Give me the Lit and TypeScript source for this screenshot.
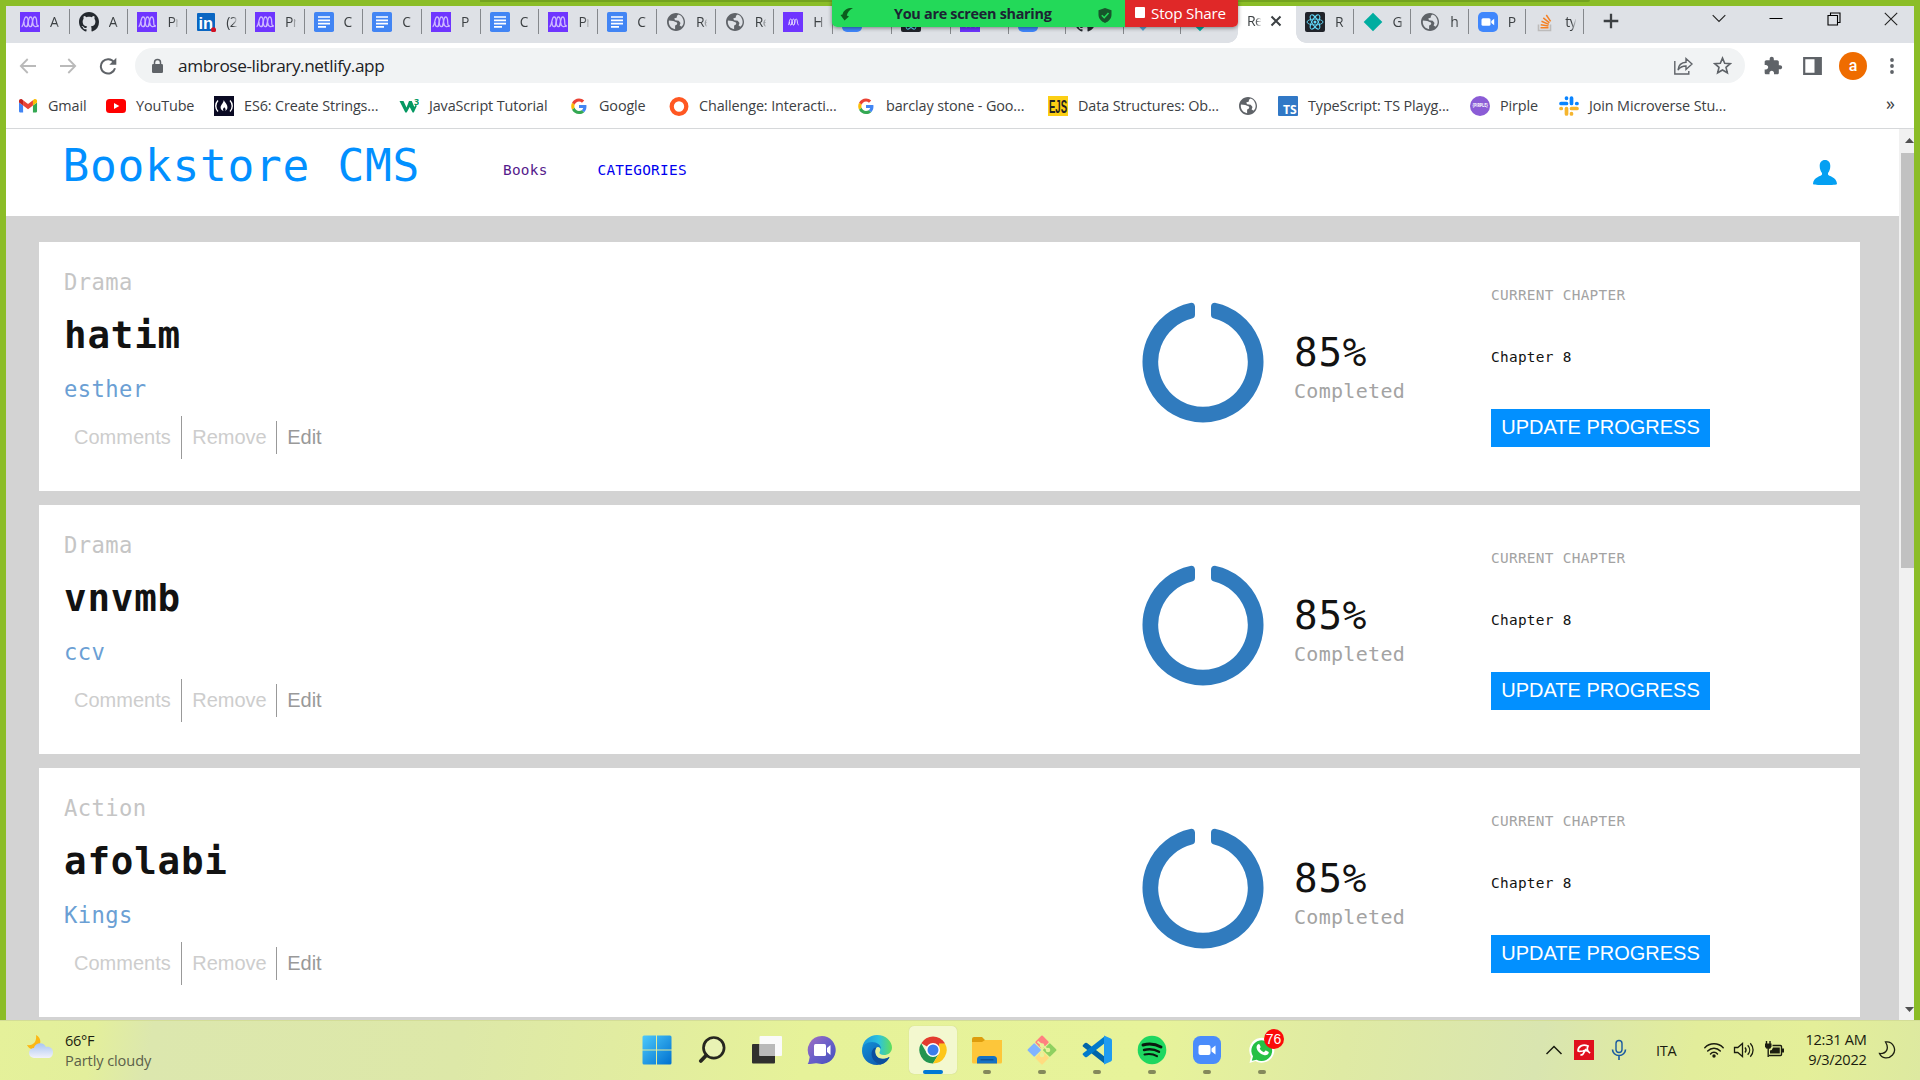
import { LitElement, html, svg, css } from "lit";
import { customElement, property } from "lit/decorators.js";

const ICONS: Record<string, unknown> = {
  microverse: svg`<rect width="20" height="20" fill="#6f35ff"/><g fill="none" stroke="#cdb8ff" stroke-width="1.300"><path d="M1.500 14.500C4 14.500 3.500 5 6 5c1.600 0 2.200 2 2.200 5s-.7 4.700-2 4.700S4 12.500 4 10"/><path d="M6.200 14.700C8.500 14.500 8 5 10.300 5c1.600 0 2.200 2 2.200 5s-.7 4.700-2 4.700S8.300 12.500 8.300 10"/><path d="M10.500 14.700C12.800 14.500 12.300 5 14.500 5c1.600 0 2.200 2 2.200 5 0 2.500.5 4.500 2 4.500M18.500 13c-1.500 2.500-5.500 2.500-5.800-2.500"/></g>`,
  microverseSmall: svg`<rect width="20" height="20" fill="#6f35ff"/><g fill="none" stroke="#e6dcff" stroke-width=".9"><path d="M5 13c1.400 0 1-6 2.600-6 1.900 0 1.900 6 0 6-1 0-1.100-1.500-1.100-3M7.800 13c1.400 0 1-6 2.600-6 1.900 0 1.900 6 0 6-1 0-1.100-1.500-1.100-3M10.600 13c1.400 0 1-6 2.600-6 1.700 0 .7 6 2.400 6"/></g>`,
  github: svg`<path transform="scale(1.25)" fill="#24292f" d="M8 0C3.580 0 0 3.580 0 8c0 3.540 2.290 6.530 5.470 7.590.4.07.55-.17.55-.38 0-.19-.01-.82-.01-1.490-2.010.37-2.530-.49-2.690-.94-.09-.23-.48-.94-.82-1.130-.28-.15-.68-.52-.01-.53.63-.01 1.080.58 1.230.82.72 1.210 1.870.87 2.330.66.07-.52.28-.87.51-1.070-1.780-.2-3.640-.89-3.640-3.950 0-.87.31-1.590.82-2.150-.08-.2-.36-1.020.08-2.120 0 0 .67-.21 2.200.82.64-.18 1.320-.27 2-.27s1.360.09 2 .27c1.530-1.040 2.200-.82 2.200-.82.44 1.100.16 1.920.08 2.120.51.56.82 1.270.82 2.150 0 3.070-1.870 3.750-3.650 3.950.29.25.54.73.54 1.480 0 1.070-.01 1.930-.01 2.200 0 .21.15.46.55.38A8.010 8.010 0 0 0 16 8c0-4.420-3.580-8-8-8"/>`,
  linkedin: svg`<rect x="1" y="1" width="18" height="18" rx="1" fill="#0a66c2"/><text x="2.500" y="16.500" font-family="Liberation Sans" font-weight="700" font-size="16.500" fill="#fff">in</text><circle cx="17.500" cy="17.800" r="2.600" fill="#d11124"/>`,
  doc: svg`<rect width="20" height="20" rx="1.800" fill="#4285f4"/><path d="M4 5h12M4 8.300h12M4 11.600h12M4 14.900h8" stroke="#fff" stroke-width="1.700"/>`,
  globe: svg`<path transform="translate(-.8 -.8) scale(.9)" fill="#5f6368" d="M12 2C6.480 2 2 6.480 2 12s4.480 10 10 10 10-4.480 10-10S17.520 2 12 2zm-1 17.930c-3.950-.49-7-3.850-7-7.930 0-.62.08-1.210.21-1.790L9 11l4 1.500c1 1.500 0 2.500-2 3.500v3.930zm6.900-2.540c-.5-.8-1.200-1.100-1.900-1.390l1-3-2-2.500-4-.5-1-2 3-1V5l2-1.400c3 .9 5.500 4.600 5.500 8.400 0 2.080-.8 3.970-2.600 5.390z"/>`,
  zoom: svg`<rect width="20" height="20" rx="5" fill="#4087fc"/><rect x="3.500" y="6.300" width="9" height="7.400" rx="1.500" fill="#fff"/><path d="M13.300 9l2.900-2.200v6.400L13.300 11z" fill="#fff"/>`,
  react: svg`<rect width="20" height="20" rx="2" fill="#20232a"/><g fill="none" stroke="#61dafb" stroke-width=".9"><ellipse cx="10" cy="10" rx="8" ry="3"/><ellipse cx="10" cy="10" rx="8" ry="3" transform="rotate(60 10 10)"/><ellipse cx="10" cy="10" rx="8" ry="3" transform="rotate(120 10 10)"/></g><circle cx="10" cy="10" r="1.500" fill="#61dafb"/>`,
  diamond: svg`<path d="M10 .7l9.300 9.300-9.300 9.300L.7 10z" fill="#00ada0"/>`,
  diamondBlue: svg`<path d="M10 1l8 9-8 9-8-9z" fill="#5aa7d6"/>`,
  stack: svg`<path d="M3.500 12.500v6h12v-6" fill="none" stroke="#bcbbbb" stroke-width="1.600"/><path d="M5.500 15.800h8M5.700 12.700l7.800 1.400M6.500 9.300l7.300 3.100M8.300 5.900l6.100 4.900M11.300 3l4.300 6.300" stroke="#f48024" stroke-width="1.500"/>`,
  gmail: svg`<g transform="translate(1 3) scale(.205) translate(-52 -42)"><path fill="#4285f4" d="M58 108h14V74L52 59v43c0 3.320 2.690 6 6 6"/><path fill="#34a853" d="M120 108h14c3.320 0 6-2.690 6-6V59l-20 15"/><path fill="#fbbc04" d="M120 48v26l20-15v-8c0-7.420-8.470-11.650-14.400-7.200"/><path fill="#ea4335" d="M72 74V48l24 18 24-18v26L96 92"/><path fill="#c5221f" d="M52 51v8l20 15V48l-5.600-4.200c-5.940-4.450-14.400-.22-14.400 7.200"/></g>`,
  youtube: svg`<rect y="3" width="20" height="14" rx="3.500" fill="#f00"/><path d="M8 7l5.300 3L8 13z" fill="#fff"/>`,
  fcc: svg`<rect width="20" height="20" fill="#0a0a23"/><path d="M4 4.500c-3 3-3 8 0 11M16 4.500c3 3 3 8 0 11" fill="none" stroke="#fff" stroke-width="1.400"/><path d="M9.800 4c1 2.500 4.200 5 3.600 8-.2 1.400-1.200 2.600-2.400 3 1-1.200.8-2.500-.7-3.800-1.500 1.200-1.700 2.600-.7 3.800-1.700-.4-3-1.700-3-3.400 0-2.800 3-4.500 3.200-7.600z" fill="#fff"/>`,
  w3: svg`<path d="M.5 5h4l3 6.500L10 5h2.800l2.500 6 1.500-2.500 1 1.500-3 6.500h-1.200L10.700 11l-3 5.500H6.300z" fill="#059862"/><text x="15" y="9" font-family="Open Sans" font-weight="700" font-size="9" fill="#059862">3</text>`,
  google: svg`<g transform="translate(2.200 2.500) scale(.325)"><path fill="#EA4335" d="M24 9.500c3.540 0 6.710 1.220 9.210 3.600l6.850-6.850C35.900 2.380 30.470 0 24 0 14.620 0 6.510 5.380 2.560 13.220l7.980 6.190C12.430 13.720 17.740 9.500 24 9.500z"/><path fill="#4285F4" d="M46.980 24.550c0-1.570-.15-3.090-.38-4.550H24v9.020h12.940c-.58 2.960-2.260 5.480-4.780 7.180l7.730 6c4.510-4.180 7.090-10.360 7.090-17.650z"/><path fill="#FBBC05" d="M10.530 28.590c-.48-1.450-.76-2.990-.76-4.590s.27-3.140.76-4.590l-7.980-6.190C.92 16.460 0 20.120 0 24c0 3.880.92 7.540 2.560 10.780l7.970-6.190z"/><path fill="#34A853" d="M24 48c6.480 0 11.930-2.130 15.890-5.810l-7.730-6c-2.150 1.450-4.920 2.300-8.160 2.300-6.260 0-11.570-4.220-13.470-9.910l-7.980 6.190C6.510 42.620 14.620 48 24 48z"/></g>`,
  ring: svg`<circle cx="10" cy="10.500" r="7.300" fill="none" stroke="#ff5722" stroke-width="4.300"/>`,
  ejs: svg`<rect width="20" height="20" fill="#fccf14"/><text x="1" y="16.500" textLength="18" lengthAdjust="spacingAndGlyphs" font-family="Liberation Sans" font-weight="700" font-size="17.500" fill="#222">EJS</text>`,
  ts: svg`<rect width="20" height="20" rx="1" fill="#3178c6"/><text x="5" y="18" textLength="13.500" lengthAdjust="spacingAndGlyphs" font-family="Open Sans" font-weight="700" font-size="12" fill="#fff">TS</text>`,
  pirple: svg`<circle cx="10" cy="10" r="10" fill="#8b5cd6"/><text x="2.600" y="11.300" textLength="15" lengthAdjust="spacingAndGlyphs" font-family="Open Sans" font-weight="700" font-size="4.500" fill="#fff">{PIRPLE}</text>`,
  slack: svg`<g stroke-width="3.700" stroke-linecap="round"><path d="M7.500 7.500H2M12.500 2v5.500" stroke="#0a84ff"/><path d="M7.500 2v.3M18 7.500h-.3" stroke="#0a84ff"/><path d="M12.500 12.500H18M7.500 12.500V18" stroke="#f5b52e"/><path d="M12.500 18v-.3M2 12.500h.3" stroke="#f5b52e"/></g>`,
};

const icon = (name: string, cls = "fav") => html`<svg class=${cls} viewBox="0 0 20 20">${ICONS[name]}</svg>`;

const TABS: [string, string][] = [
  ["microverse", "A"], ["github", "A"], ["microverse", "Pr"], ["linkedin", "(2"], ["microverse", "Pr"],
  ["doc", "C"], ["doc", "C"], ["microverse", "P"], ["doc", "C"], ["microverse", "Pr"], ["doc", "C"],
  ["globe", "Re"], ["globe", "Re"], ["microverseSmall", "H"], ["zoom", ""], ["react", ""], ["microverse", ""],
  ["zoom", ""], ["github", ""], ["diamondBlue", ""], ["diamond", ""],
];
const TABS_AFTER: [string, string][] = [
  ["react", "R"], ["diamond", "G"], ["globe", "h"], ["zoom", "P"], ["stack", "ty"],
];
const BOOKMARKS: [string, string][] = [
  ["gmail", "Gmail"], ["youtube", "YouTube"], ["fcc", "ES6: Create Strings..."], ["w3", "JavaScript Tutorial"],
  ["google", "Google"], ["ring", "Challenge: Interacti..."], ["google", "barclay stone - Goo..."],
  ["ejs", "Data Structures: Ob..."], ["globe", ""], ["ts", "TypeScript: TS Playg..."], ["pirple", "Pirple"],
  ["slack", "Join Microverse Stu..."],
];

@customElement("browser-chrome")
class BrowserChrome extends LitElement {
  static styles = css`
    :host { display: block; font-family: "Open Sans", "Noto Sans", sans-serif; color: #3c4043; }
    svg { display: block; flex: none; }
    .strip { display: flex; height: 37px; background: #dee1e6; padding-left: 5px; box-sizing: border-box; }
    .tabs { display: grid; grid-template-columns: repeat(17, 58.72px) repeat(4, 57.2px) 58px repeat(5, 57.6px); }
    .tab { display: flex; align-items: center; height: 25px; margin-top: 3px; padding-left: 9px; border-right: 1px solid #85888c; box-sizing: border-box; overflow: hidden; }
    .tab.last { border-right: 0; }
    .fav { width: 20px; height: 20px; }
    .title { width: 11px; margin-left: 10px; overflow: hidden; font-size: 14px; white-space: nowrap; line-height: 20px; letter-spacing: -.6px; -webkit-mask-image: linear-gradient(90deg, #000 60%, transparent 105%); }
    .active { position: relative; background: #fff; display: flex; align-items: center; padding: 0 0 7px 9px; box-sizing: border-box; height: 37px; }
    .active .title { width: 14px; margin-left: 0; }
    .active::before, .active::after { content: ""; position: absolute; bottom: 0; width: 10px; height: 10px; }
    .active::before { left: -10px; background: radial-gradient(circle at 0 0, transparent 9.500px, #fff 10px); }
    .active::after { right: -10px; background: radial-gradient(circle at 100% 0, transparent 9.500px, #fff 10px); }
    .close { margin-left: 9px; width: 12px; height: 12px; }
    .plus { width: 16px; height: 16px; margin: 7px 0 0 19px; }
    .wincontrols { display: flex; gap: 43.300px; margin: 6px 0 0 93px; }
    .wincontrols svg { width: 14px; height: 14px; }
    .bar { display: flex; align-items: center; height: 45px; background: #fff; padding-left: 13px; }
    .nav { display: flex; gap: 22px; width: 116px; }
    .nav svg { width: 18px; height: 18px; }
    .omni { display: flex; align-items: center; width: 1610px; height: 35px; box-sizing: border-box; border-radius: 18px; background: #f1f3f4; padding: 0 13px 0 16px; }
    .lock { width: 13px; height: 16px; }
    .url { flex: 1; margin-left: 14px; font-size: 17.200px; line-height: 24px; letter-spacing: -.4px; color: #202124; }
    .share { width: 20px; height: 20px; margin-right: 20px; }
    .star { width: 19px; height: 19px; }
    .ext { display: flex; align-items: center; margin-left: 18px; }
    .puzzle { width: 20px; height: 20px; }
    .panel { width: 19px; height: 18px; margin-left: 20px; }
    .avatar { width: 28px; height: 28px; border-radius: 50%; background: #ef6c00; color: #fff; text-align: center; font: 500 16px/27px Roboto, sans-serif; margin-left: 17px; }
    .dots { width: 6px; height: 18px; margin-left: 22px; }
    .marks { display: grid; grid-template-columns: 88px 108px 185px 170px 100px 187px 192px 190px 40px 192px 89px 327px auto; align-items: center; height: 41px; padding: 0 0 1px 12px; box-sizing: border-box; background: #fff; border-bottom: 1px solid #d6d8da; }
    .mark { display: flex; align-items: center; white-space: nowrap; font-size: 14.400px; line-height: 20px; letter-spacing: -.12px; padding-bottom: 4px; }
    .mark .fav { margin-right: 10px; }
    .mark span { padding-top: 1px; }
    .more { font-size: 18px; line-height: 20px; padding-bottom: 9px; }
  `;
  render() {
    const tab = (t: [string, string], last = false) => html`<div class="tab ${last ? "last" : ""}">${icon(t[0])}<span class="title">${t[1]}</span></div>`;
    return html`
      <div class="strip">
        <div class="tabs">
          ${TABS.map((t, i) => tab(t, i === TABS.length - 1))}
          <div class="active"><span class="title">Re</span>
            <svg class="close" viewBox="0 0 12 12"><path d="M1.500 1.500l9 9M10.500 1.500l-9 9" stroke="#3c4043" stroke-width="2"/></svg></div>
          ${TABS_AFTER.map((t) => tab(t))}
        </div>
        <svg class="plus" viewBox="0 0 16 16"><path d="M8 .7v14.600M.7 8h14.600" stroke="#3c4043" stroke-width="2.300"/></svg>
        <div class="wincontrols">
          <svg viewBox="0 0 14 14"><path d="M.7 3.200L7 9.500l6.300-6.300" fill="none" stroke="#222" stroke-width="1.100"/></svg>
          <svg viewBox="0 0 14 14"><path d="M.5 6.500h13" stroke="#000"/></svg>
          <svg viewBox="0 0 14 14"><path d="M1 3.500h9.500V13H1zM3.500 3V1h9.500v9.500h-2" fill="none" stroke="#000" stroke-width="1.100"/></svg>
          <svg viewBox="0 0 14 14"><path d="M.8.8l12.400 12.400M13.200.8L.8 13.200" stroke="#222" stroke-width="1.100"/></svg>
        </div>
      </div>
      <div class="bar">
        <div class="nav">
          <svg viewBox="0 0 18 18"><path d="M17 9H2M8.700 2L1.800 9l6.900 7" fill="none" stroke="#bababa" stroke-width="1.800"/></svg>
          <svg viewBox="0 0 18 18"><path d="M1 9h15M9.300 2l6.900 7-6.900 7" fill="none" stroke="#bababa" stroke-width="1.800"/></svg>
          <svg viewBox="0 0 18 18"><path d="M16 11.300A7.200 7.200 0 1 1 15 5.300" fill="none" stroke="#5f6368" stroke-width="2"/><path d="M17.300.8v7h-7z" fill="#5f6368"/></svg>
        </div>
        <div class="omni">
          <svg class="lock" viewBox="0 0 13 16"><rect x="1" y="6" width="11" height="9" rx="1.200" fill="#5f6368"/><path d="M3.500 6V4.500a3 3 0 0 1 6 0V6" fill="none" stroke="#5f6368" stroke-width="1.500"/></svg>
          <span class="url">ambrose-library.netlify.app</span>
          <svg class="share" viewBox="0 0 20 20"><path d="M1.800 5v13h14v-3M5 14c.5-5 3-7.500 8-7.700V2.500L19 8l-6 5.500V10c-4 0-6 1-8 4z" fill="none" stroke="#5f6368" stroke-width="1.400"/></svg>
          <svg class="star" viewBox="0 0 20 20"><path d="M10 2.200l2.300 5.400 5.900.5-4.500 3.900 1.400 5.700-5.100-3-5.100 3L6.300 12 1.800 8.100l5.900-.5z" fill="none" stroke="#5f6368" stroke-width="1.700"/></svg>
        </div>
        <div class="ext">
          <svg class="puzzle" viewBox="0 0 24 24"><path fill="#5f6368" d="M20.500 11H19V7c0-1.100-.9-2-2-2h-4V3.500C13 2.120 11.880 1 10.500 1S8 2.120 8 3.500V5H4c-1.100 0-1.990.9-1.990 2v3.800H3.500c1.490 0 2.700 1.210 2.700 2.700s-1.210 2.700-2.700 2.700H2V20c0 1.100.9 2 2 2h3.800v-1.500c0-1.490 1.210-2.700 2.700-2.700 1.490 0 2.700 1.210 2.700 2.700V22H17c1.100 0 2-.9 2-2v-4h1.500c1.380 0 2.500-1.120 2.500-2.500S21.880 11 20.500 11z"/></svg>
          <svg class="panel" viewBox="0 0 19 18"><path d="M1.200 1.200h16.600v15.600H1.200z" fill="none" stroke="#5f6368" stroke-width="2.200"/><path d="M11.500 1H18v16h-6.500z" fill="#5f6368"/></svg>
          <div class="avatar">a</div>
          <svg class="dots" viewBox="0 0 6 18"><circle cx="3" cy="3" r="1.900" fill="#5f6368"/><circle cx="3" cy="9" r="1.900" fill="#5f6368"/><circle cx="3" cy="15" r="1.900" fill="#5f6368"/></svg>
        </div>
      </div>
      <div class="marks">
        ${BOOKMARKS.map(([i, t]) => html`<div class="mark">${icon(i)}<span>${t}</span></div>`)}
        <span class="more">»</span>
      </div>`;
  }
}

@customElement("book-card")
class BookCard extends LitElement {
  @property() category = "";
  @property() name = "";
  @property() author = "";
  static styles = css`
    :host { display: block; font-family: "DejaVu Sans Mono", monospace; }
    .card { display: grid; grid-template-columns: 1079px 348px 1fr; height: 249px; background: #fff; padding-left: 25px; box-sizing: border-box; }
    .info { padding-top: 27px; }
    .category { font-size: 22.200px; line-height: 26px; letter-spacing: .4px; color: #c5c5c5; }
    .name { font-weight: 700; font-size: 37.500px; line-height: 44px; margin-top: 18px; letter-spacing: .8px; color: #121212; }
    .author { font-size: 22.200px; line-height: 26px; letter-spacing: .4px; margin-top: 19px; color: #6b9fd4; }
    .actions { display: flex; align-items: center; margin-top: 14px; font: 20px/22px "Liberation Sans", Arial, sans-serif; color: #cdcdcd; }
    .act { display: flex; align-items: center; height: 33px; padding: 0 9.500px 2px 10px; box-sizing: border-box; }
    .act.tall { height: 43px; padding-right: 10.500px; border-right: 1px solid #999; }
    .act.mid { border-right: 1px solid #999; }
    .act.edit { color: #999; }
    .progress { display: flex; padding-top: 59px; }
    .ring { width: 122px; height: 122px; margin-left: -1.500px; }
    .figures { padding: 31px 0 0 30.500px; }
    .percent { font-size: 39.200px; line-height: 42px; letter-spacing: .8px; color: #121212; }
    .completed { font-size: 20px; line-height: 26px; letter-spacing: .3px; margin-top: 4px; color: #a3a3a3; }
    .chapter { padding-top: 44px; font-size: 14.400px; line-height: 18px; letter-spacing: .3px; }
    .label { color: #a3a3a3; }
    .current { margin-top: 44px; color: #121212; }
    .update { margin-top: 43px; width: 219px; height: 38px; padding: 0; border: 0; background: #0290ff; color: #fff; font: 20px/36px "Liberation Sans", Arial, sans-serif; display: block; padding-bottom: 2px; }
  `;
  render() {
    return html`<div class="card">
      <div class="info">
        <div class="category">${this.category}</div>
        <div class="name">${this.name}</div>
        <div class="author">${this.author}</div>
        <div class="actions"><span class="act tall">Comments</span><span class="act mid">Remove</span><span class="act edit">Edit</span></div>
      </div>
      <div class="progress">
        <svg class="ring" viewBox="-61 -61 122 122"><path d="M12-55.200A56.500 56.500 0 1 1-12-55.200V-47.300A48.800 48.800 0 1 0 12-47.300Z" fill="#307bbe" stroke="#307bbe" stroke-width="8" stroke-linejoin="round"/></svg>
        <div class="figures"><div class="percent">85%</div><div class="completed">Completed</div></div>
      </div>
      <div class="chapter">
        <div class="label">CURRENT CHAPTER</div>
        <div class="current">Chapter 8</div>
        <button class="update">UPDATE PROGRESS</button>
      </div>
    </div>`;
  }
}

@customElement("task-bar")
class TaskBar extends LitElement {
  static styles = css`
    :host { display: block; font-family: "Open Sans", "Noto Sans", sans-serif; }
    svg { display: block; }
    .bar { display: flex; height: 60px; box-sizing: border-box; border-top: 1px solid #d3dd97; color: #1b1d10;
      background: linear-gradient(100deg, #e5f19a 0, #e3ef9c 5%, #dce7ae 8%, #dde8a8 24%, #e2ed9f 34%, #e6f299 42%, #e7f39a 60%, #dfeaa4 70%, #d9e5b0 80%, #e2ed9b 88%, #e4ef99 94%, #dde9a0 100%); }
    .weather { display: flex; width: 629.500px; padding: 9px 0 0 26px; box-sizing: border-box; }
    .weather svg { width: 28px; height: 28px; margin-top: 2px; }
    .lines { margin-left: 11px; font-size: 14.600px; line-height: 20px; letter-spacing: -.3px; }
    .muted { color: #5b604a; letter-spacing: -.1px; }
    .apps { display: grid; grid-template-columns: repeat(12, 55px); }
    .app { position: relative; display: flex; flex-direction: column; align-items: center; padding-top: 14px; }
    .app svg { width: 30px; height: 30px; }
    .dot { width: 8px; height: 4px; border-radius: 2px; background: #84895b; margin-top: 5px; }
    .on { margin: 5px 3px 0 4px; height: 48px; padding-top: 9px; box-sizing: border-box; border-radius: 5px; background: #f3f8cf; box-shadow: 0 0 1px #b9c28c; }
    .on .dot { width: 20px; background: #0078d4; }
    .badge { position: absolute; left: 29px; top: 8px; width: 20px; height: 20px; border-radius: 50%; background: #fb0a0a; color: #fff; font: 14px/20px "Liberation Sans", sans-serif; text-align: center; }
    .tray { display: flex; align-items: center; margin-left: 255.500px; flex: 1; padding-bottom: 1px; }
    .tray svg { flex: none; }
    .chev { width: 18px; height: 12px; }
    .avira { width: 20px; height: 20px; margin-left: 11px; }
    .mic { width: 16px; height: 22px; margin-left: 17px; }
    .lang { font-size: 14.500px; letter-spacing: -.3px; margin-left: 29px; width: 47px; }
    .wifi { width: 22px; height: 20px; }
    .spk { width: 22px; height: 20px; margin-left: 8px; }
    .bat { width: 21px; height: 20px; margin-left: 8px; }
    .clock { text-align: right; font-size: 14.600px; line-height: 20px; letter-spacing: -.3px; width: 82.500px; padding-bottom: 2px; }
    .moon { width: 18px; height: 20px; margin-left: 11px; }
  `;
  render() {
    return html`<div class="bar">
      <div class="weather">
        <svg viewBox="0 0 28 28"><path d="M10 3c6 3 6 11-1 14-3 1-6 0-8-4 6 1 10-3 9-10z" fill="#fcb814"/><defs><linearGradient id="cl" x2="0" y2="1"><stop stop-color="#a9c6f2"/><stop offset="1" stop-color="#f2f2fa"/></linearGradient></defs><path d="M8 26a5 5 0 0 1 0-10c1-5 9-7 12-1 4-1 7 2 7 5 0 4-2 6-5 6z" fill="url(#cl)"/></svg>
        <div class="lines"><div>66°F</div><div class="muted">Partly cloudy</div></div>
      </div>
      <div class="apps">
        <div class="app"><svg viewBox="0 0 30 30"><defs><linearGradient id="w" x2="1" y2="1"><stop stop-color="#4cc9fb"/><stop offset="1" stop-color="#0070cf"/></linearGradient></defs><path d="M2 .5h12v14H.5V2Q.5.5 2 .5zM15 .5h13q1.500 0 1.500 1.500v12.500H15zM.5 15.500H14v14H2Q.5 29.500.5 28zM15 15.500h14.500V28q0 1.500-1.500 1.500H15z" fill="url(#w)"/></svg></div>
        <div class="app"><svg viewBox="0 0 30 30"><circle cx="16.800" cy="12.800" r="10.300" fill="#e9f2b4" stroke="#26261f" stroke-width="2.700"/><path d="M9.300 20.300L3.800 26" stroke="#26261f" stroke-width="3.800" stroke-linecap="round"/></svg></div>
        <div class="app"><svg viewBox="0 0 30 30"><rect y="9" width="23" height="19.500" rx="1" fill="#30302e"/><rect x="7.500" y="1" width="22.500" height="20" rx="1" fill="#fafafa"/><path d="M7.500 9H23v12H7.500z" fill="#b9b9b9"/></svg></div>
        <div class="app"><svg viewBox="0 0 30 30"><defs><linearGradient id="t" x2="1" y2="1"><stop stop-color="#a26fc0"/><stop offset=".5" stop-color="#6a5fc9"/><stop offset="1" stop-color="#4550bd"/></linearGradient></defs><path d="M15 1a14 14 0 1 1-4 27.500c-3-.9-6 .5-10.300.5C2 27 2 25 2.700 22A14 14 0 0 1 15 1z" fill="url(#t)"/><rect x="7" y="9" width="12" height="12" rx="1.500" fill="#fff"/><path d="M20 13l3.500-3v10L20 17z" fill="#fff"/></svg></div>
        <div class="app"><svg viewBox="0 0 30 30"><defs><linearGradient id="e1" x2="1"><stop stop-color="#1c96db"/><stop offset=".55" stop-color="#2cc2df"/><stop offset="1" stop-color="#62df58"/></linearGradient><linearGradient id="e2" x2="1" y2="1"><stop stop-color="#1391d8"/><stop offset="1" stop-color="#0f4fa6"/></linearGradient></defs><path d="M.3 13C1 5.500 7.500 0 15 0c9 0 15 6.500 15 12.500 0 5-4 7.500-8 7.500-3.500 0-5-1.500-4.500-2.700 1.500-2.300 1-6.300-3.500-7.300C8 9 1.500 10 .3 15z" fill="url(#e1)"/><path d="M0 16C0 10 5 7 10 7c5 0 9 3 9 7-1-2-3.500-3-5-1-2 2.500-1 9 4 10.500 4 1.300 8-.5 9.500-1.500C25 27 20.500 30 15 30 6 30 0 23 0 16z" fill="url(#e2)"/><path d="M12 13c-5 5-2 14 6 16.500 5-1 8-4 9.500-7.500-2 1-5 2.500-9.500 1.500-5-1.500-6-8-3.500-11z" fill="#0c4f9e"/></svg></div>
        <div class="app on"><svg viewBox="0 0 30 30"><path d="M15 15L3.300 8.200A13.600 13.600 0 0 1 26.800 8.200z" fill="#e33b2e"/><path d="M3.200 8.200A13.600 13.600 0 0 0 15 28.600l6-10.200H9z" fill="#239550"/><path d="M26.800 8.200A13.600 13.600 0 0 1 15 28.600l6-10.200V8.200z" fill="#fdc619"/><path d="M15 8.200h11.800L24 5H9z" fill="#e33b2e"/><circle cx="15" cy="15" r="7" fill="#fff"/><circle cx="15" cy="15" r="5.500" fill="#3b7ded"/></svg><span class="dot"></span></div>
        <div class="app"><svg viewBox="0 0 30 30"><path d="M0 8V4q0-2 2-2h8l3 3h15q2 0 2 2v4H0z" fill="#dd9d0d"/><path d="M0 7h10l3-2h17v22q0 1.500-1.500 1.500h-27Q0 28.500 0 27z" fill="#fdc63a"/><path d="M5 28.500v-4Q5 21 8.500 21h13q3.500 0 3.500 3.500v4z" fill="#1472c4"/><path d="M8.500 24.800h13" stroke="#0c4b8e" stroke-width="1.200"/></svg><span class="dot"></span></div>
        <div class="app"><svg viewBox="0 0 30 30"><g transform="rotate(45 15 15)"><rect x="4.500" y="4.500" width="10" height="10" rx="1" fill="#ff8080"/><rect x="15.500" y="4.500" width="10" height="10" rx="1" fill="#8fd061"/><rect x="4.500" y="15.500" width="10" height="10" rx="1" fill="#80b3ff"/><rect x="15.500" y="15.500" width="10" height="10" rx="1" fill="#ffdc80"/></g><g stroke="#e7f39a" stroke-width="1.800" fill="#e7f39a"><path d="M10.500 6.500L21 15M15 10v10"/><circle cx="15" cy="10.500" r="1.400"/><circle cx="15" cy="20" r="1.400"/><circle cx="21" cy="15" r="1.400"/></g></svg><span class="dot"></span></div>
        <div class="app"><svg viewBox="0 0 30 30"><path d="M1 10l2-2q1-.7 2 0l18 14v7L.8 11.500Q.3 10.700 1 10z" fill="#0065a9"/><path d="M1 20l2 2q1 .7 2 0L23 8V1L.8 18.500Q.3 19.300 1 20z" fill="#007acc"/><path d="M22 .5l6.800 3q1.200.5 1.200 2v19q0 1.500-1.200 2l-6.800 3z" fill="#1f9cf0"/></svg><span class="dot"></span></div>
        <div class="app"><svg viewBox="0 0 30 30"><circle cx="15" cy="15" r="14.300" fill="#1ed760"/><g fill="none" stroke="#0a1a0f" stroke-linecap="round"><path d="M6 10c6-1.700 12.500-1 18 2" stroke-width="2.900"/><path d="M7 15c5.500-1.400 10.500-.8 15 1.800" stroke-width="2.400"/><path d="M7.500 19.600c4.600-1 8.700-.6 12.500 1.600" stroke-width="2"/></g></svg><span class="dot"></span></div>
        <div class="app"><svg viewBox="0 0 30 30"><rect x="1" y="1" width="28" height="28" rx="7.500" fill="#4a8cfb"/><rect x="6.500" y="10" width="12" height="10" rx="2" fill="#fff"/><path d="M19.500 13.500l4-3v9l-4-3z" fill="#fff"/></svg><span class="dot"></span></div>
        <div class="app"><svg viewBox="0 0 30 30"><path d="M2.500 28L4 21.500A12.500 12.500 0 1 1 8.500 26z" fill="#fff"/><path d="M4.800 25.700L6 21.300a10.400 10.400 0 1 1 3.600 3.400z" fill="#25c045"/><path d="M10.700 9.500c1-1 1.600-.7 2 .2l.9 2c.2.600-.2 1-.9 1.800.9 1.800 2.300 3 4.200 3.800l1.200-1.400c.4-.5.8-.4 1.300-.1l1.900 1c.6.300.5.800.3 1.500-.5 1.400-2.400 2.200-4 1.900-4-.7-7.300-3.800-8-7.200-.2-1.300.3-2.700 1.100-3.500z" fill="#fff"/></svg><span class="dot"></span><span class="badge">76</span></div>
      </div>
      <div class="tray">
        <svg class="chev" viewBox="0 0 18 12"><path d="M1.500 10L9 2.500l7.500 7.500" fill="none" stroke="#1b1d10" stroke-width="1.500"/></svg>
        <svg class="avira" viewBox="0 0 20 20"><rect width="20" height="20" fill="#e0101d"/><path d="M4 11C4 6 9 4 14 6c-1 2-1 5 2 7-2-2-5-3-7-2-2 0-4 1-5 0zM12 9l-3 5q-1 1.500-2.500.5" fill="none" stroke="#fff" stroke-width="1.700"/></svg>
        <svg class="mic" viewBox="0 0 16 22"><rect x="5" y="1.500" width="6" height="12" rx="3" fill="none" stroke="#195aa0" stroke-width="1.400"/><path d="M1.500 10.500a6.500 6 0 0 0 13 0M8 17v4" fill="none" stroke="#195aa0" stroke-width="1.600"/></svg>
        <span class="lang">ITA</span>
        <svg class="wifi" viewBox="0 0 22 20"><g fill="none" stroke="#1b1d10" stroke-width="1.500" stroke-linecap="round"><path d="M1.800 7.800c5-5.300 13.400-5.300 18.400 0M4.700 11c3.500-3.800 9.100-3.800 12.600 0M7.500 14c2-2.200 5-2.200 7 0"/></g><circle cx="11" cy="16" r="1.700" fill="#1b1d10"/></svg>
        <svg class="spk" viewBox="0 0 22 20"><g fill="none" stroke="#1b1d10" stroke-width="1.300"><path d="M1.500 7.500h3.300L9.500 3.500v13l-4.700-4H1.500zM12 7.500c1.300 1.500 1.300 3.500 0 5M14.700 5.200c2.600 2.800 2.600 6.800 0 9.600M17.300 3.200c3.700 4 3.700 9.600 0 13.600"/></g></svg>
        <svg class="bat" viewBox="0 0 21 20"><path d="M3.500 1v3M7 1v3M5.200 9v8" stroke="#1b1d10" stroke-width="1.400"/><path d="M2 3.500h6.500v3q-.5 2.500-3.200 2.500T2 6.500z" fill="#1b1d10"/><path d="M9.500 5.500h8q1 0 1 1v8q0 1-1 1H6" fill="none" stroke="#1b1d10" stroke-width="1.400"/><path d="M10 7.500h6.800v6H7v-3q2.500-.5 3-3zM19 8.500h2v4h-2z" fill="#1b1d10"/></svg>
        <div class="clock"><div>12:31 AM</div><div>9/3/2022</div></div>
        <svg class="moon" viewBox="0 0 18 20"><path d="M7.500 2c8-1 11.500 8 7 13-4 4.500-11 3.500-13-1.500 7 .5 10-5 6-11.500z" fill="none" stroke="#1b1d10" stroke-width="1.300"/></svg>
      </div>
    </div>`;
  }
}

@customElement("app-root")
class AppRoot extends LitElement {
  static styles = css`
    :host { display: block; width: 1920px; height: 1080px; overflow: hidden; }
    .desktop { position: relative; display: grid; grid-template-rows: 1020px 60px; }
    .frame { display: grid; grid-template-rows: 123px 891px; padding: 6px 6px 0; box-sizing: border-box; background: #8bbd27; }
    .shade { position: absolute; left: 480px; top: 0; width: 1110px; height: 2px; border-radius: 0 0 6px 0; background: #74a31f; }
    .page { display: flex; min-width: 0; overflow: hidden; background: #d3d3d3; }
    .view { width: 1893px; font-family: "DejaVu Sans Mono", monospace; }
    .head { display: flex; height: 87px; background: #fff; padding-left: 56.500px; box-sizing: border-box; }
    .logo { width: 440.500px; margin-top: 12px; font-size: 44.500px; line-height: 50px; letter-spacing: .7px; color: #0290ff; }
    .link { margin-top: 32px; font-size: 14.400px; line-height: 18px; letter-spacing: .27px; }
    .visited { width: 94.500px; color: #551a8b; }
    .unvisited { flex: 1; color: #0000ee; }
    .user { width: 24px; height: 25px; margin: 31px 62.500px 0 0; }
    .list { display: grid; gap: 14px; padding: 26px 39px 0 33px; }
    .scroll { width: 15px; flex: none; overflow: hidden; background: #f1f1f1; }
    .arrow { display: block; width: 21px; height: 24px; }
    .thumb { height: 415px; margin-left: 2px; background: #c1c1c1; }
    .gap { height: 428px; }
    .banner { position: absolute; left: 832px; top: 0; display: flex; height: 27px; width: 406px; border-radius: 0 0 5px 5px; overflow: hidden; font-family: "Open Sans", sans-serif; box-shadow: 0 1px 4px rgba(0,0,0,.45); }
    .sharing { display: flex; align-items: center; width: 293px; background: #23d959; color: #1c2333; font-weight: 700; font-size: 14.400px; letter-spacing: -.28px; white-space: nowrap; }
    .leaf { width: 14px; height: 14px; margin-left: 8px; }
    .msg { width: 204px; margin-left: 40px; line-height: 26px; }
    .shield { width: 14px; height: 15px; margin-top: 3px; }
    .stop { display: flex; align-items: center; flex: 1; background: #e02828; color: #fff; font-size: 15.200px; letter-spacing: -.2px; padding: 0 0 2px 10px; box-sizing: border-box; white-space: nowrap; }
    .square { width: 10px; height: 11px; background: #fff; border-radius: 1px; margin-right: 6px; }
  `;
  render() {
    return html`<div class="desktop">
      <div class="frame">
        <browser-chrome></browser-chrome>
        <div class="page">
          <div class="view">
            <div class="head">
              <div class="logo">Bookstore CMS</div>
              <span class="link visited">Books</span>
              <span class="link unvisited">CATEGORIES</span>
              <svg class="user" viewBox="0 0 24 25"><path d="M12 0c3.500 0 5.300 2.500 5.300 6 0 3-1 5.500-2.300 7v1.500c0 1.500 9 2.500 9 9.500 0 .8-5 1-12 1s-12-.2-12-1c0-7 9-8 9-9.500V13c-1.300-1.500-2.300-4-2.300-7C6.700 2.500 8.500 0 12 0z" fill="#04a0f2"/></svg>
            </div>
            <div class="list">
              <book-card category="Drama" name="hatim" author="esther"></book-card>
              <book-card category="Drama" name="vnvmb" author="ccv"></book-card>
              <book-card category="Action" name="afolabi" author="Kings"></book-card>
            </div>
          </div>
          <div class="scroll">
            <svg class="arrow" viewBox="0 0 21 24"><path d="M6 14l4.500-5 4.500 5z" fill="#505050"/></svg>
            <div class="thumb"></div>
            <div class="gap"></div>
            <svg class="arrow" viewBox="0 0 21 24"><path d="M6 11l4.500 5 4.500-5z" fill="#505050"/></svg>
          </div>
        </div>
      </div>
      <task-bar></task-bar>
      <div class="shade"></div>
      <div class="banner">
        <div class="sharing">
          <svg class="leaf" viewBox="0 0 14 14"><path d="M13 1C9 .5 3.500 2 2.500 7.500L.5 8l4 5.500L9 9.500 6.800 8.500C7.500 5.500 9.500 2.800 13 1z" fill="#0b5d1e"/></svg>
          <span class="msg">You are screen sharing</span>
          <svg class="shield" viewBox="0 0 14 15"><path d="M7 0l6.500 2.300v4.500C13.500 11 10.500 13.500 7 15 3.500 13.500.5 11 .5 6.800V2.300z" fill="#17562b"/><path d="M3.800 7.300l2.400 2.400L10.500 5" fill="none" stroke="#23d959" stroke-width="1.600"/></svg>
        </div>
        <div class="stop"><span class="square"></span>Stop Share</div>
      </div>
    </div>`;
  }
}
